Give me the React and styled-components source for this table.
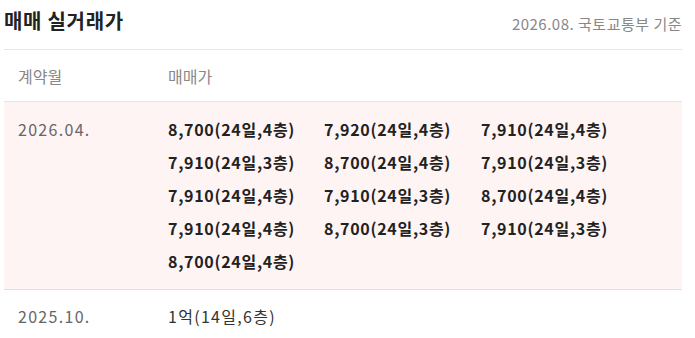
import React from "react";
import styled, { createGlobalStyle } from "styled-components";

const GlobalStyle = createGlobalStyle`
  body {
    margin: 0;
    background: #ffffff;
    font-family: "Noto Sans CJK KR", "Noto Sans", sans-serif;
  }
`;

const rows = [
  {
    month: "2026.04.",
    highlight: true,
    deals: [
      "8,700(24일,4층)",
      "7,920(24일,4층)",
      "7,910(24일,4층)",
      "7,910(24일,3층)",
      "8,700(24일,4층)",
      "7,910(24일,3층)",
      "7,910(24일,4층)",
      "7,910(24일,3층)",
      "8,700(24일,4층)",
      "7,910(24일,4층)",
      "8,700(24일,3층)",
      "7,910(24일,3층)",
      "8,700(24일,4층)",
    ],
  },
  {
    month: "2025.10.",
    highlight: false,
    deals: ["1억(14일,6층)"],
  },
];

function App() {
  return (
    <Wrapper>
      <GlobalStyle />
      <TitleBar>
        <Title>매매 실거래가</Title>
        <Source>2026.08. 국토교통부 기준</Source>
      </TitleBar>
      <Table>
        <HeadRow>
          <HeadLabel wide>계약월</HeadLabel>
          <HeadLabel>매매가</HeadLabel>
        </HeadRow>
        {rows.map((row) => (
          <Row key={row.month} highlight={row.highlight}>
            <MonthCell>{row.month}</MonthCell>
            <Deals>
              {row.deals.map((d, i) => (
                <Deal key={i} bold={row.highlight}>
                  {d}
                </Deal>
              ))}
            </Deals>
          </Row>
        ))}
      </Table>
    </Wrapper>
  );
}

export default App;

const Wrapper = styled.div`
  width: 678px;
  padding-left: 4px;
`;

const TitleBar = styled.div`
  display: flex;
  align-items: center;
  justify-content: space-between;
  height: 49px;
`;

const Title = styled.h2`
  margin: -8px 0 0;
  font-size: 20px;
  font-weight: 700;
  color: #222;
  letter-spacing: 0.7px;
`;

const Source = styled.span`
  font-size: 15px;
  color: #888;
  letter-spacing: 0.5px;
  margin-top: -3px;
`;

const Table = styled.div`
  border-top: 1px solid #e6e6e6;
`;

const HeadRow = styled.div`
  display: flex;
  align-items: center;
  height: 51px;
`;

const HeadLabel = styled.div`
  width: ${(p) => (p.wide ? "150px" : "auto")};
  padding-left: ${(p) => (p.wide ? "14px" : "0")};
  font-size: 16px;
  color: #888;
`;

const MonthCell = styled.div`
  width: 150px;
  padding-left: 14px;
  flex-shrink: 0;
  font-size: 16px;
  letter-spacing: 1.3px;
  color: #666;
`;

const Row = styled.div`
  display: flex;
  align-items: flex-start;
  padding: ${(p) => (p.highlight ? "15px 0 15px" : "14px 0")};
  background: ${(p) => (p.highlight ? "#fff4f4" : "#ffffff")};
  border-top: ${(p) => (p.highlight ? "1px solid #ffdada" : "none")};
  border-bottom: ${(p) => (p.highlight ? "1px solid #ffd4d4" : "none")};
  line-height: 25px;
`;

const Deals = styled.div`
  display: grid;
  grid-template-columns: 156px 157px 157px;
  row-gap: 8px;
`;

const Deal = styled.div`
  font-size: 16px;
  font-weight: ${(p) => (p.bold ? 700 : 400)};
  color: ${(p) => (p.bold ? "#222" : "#333")};
  letter-spacing: ${(p) => (p.bold ? "0.7px" : "1.3px")};
  white-space: nowrap;
`;
